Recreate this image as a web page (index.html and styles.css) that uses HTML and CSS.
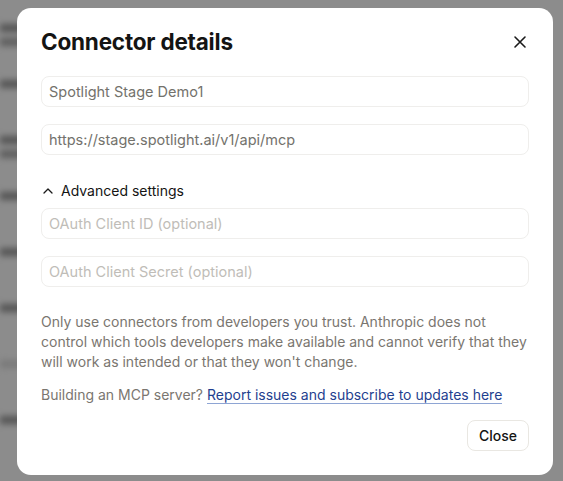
FILE: index.html
```html
<!DOCTYPE html>
<html lang="en">
<head>
<meta charset="UTF-8">
<meta name="viewport" content="width=device-width, initial-scale=1.0">
<title>Connector details</title>
<link rel="stylesheet" href="styles.css">
</head>
<body>

<div class="page">
  <div class="page-line two"></div>
  <div class="page-line"></div>
  <div class="page-line two"></div>
  <div class="page-line"></div>
  <div class="page-line"></div>
  <div class="page-line"></div>
  <div class="page-line faint"></div>
  <div class="page-line"></div>
</div>

<div class="overlay">
  <div class="modal">
    <div class="modal-header">
      <h2>Connector details</h2>
      <button class="close-x" type="button" aria-label="Close">
        <svg width="14" height="14" viewBox="0 0 14 14"><path d="M2 2 L12 12 M12 2 L2 12" stroke="#1a1a1a" stroke-width="1.6" stroke-linecap="round"/></svg>
      </button>
    </div>

    <div class="fields">
      <input class="field" type="text" value="Spotlight Stage Demo1">
      <input class="field" type="text" value="https://stage.spotlight.ai/v1/api/mcp">
    </div>

    <button class="advanced" type="button">
      <svg width="12" height="12" viewBox="0 0 12 12"><path d="M2 8 L6 4 L10 8" fill="none" stroke="#1a1a1a" stroke-width="1.3" stroke-linecap="round" stroke-linejoin="round"/></svg>
      Advanced settings
    </button>

    <div class="fields">
      <input class="field" type="text" placeholder="OAuth Client ID (optional)">
      <input class="field" type="text" placeholder="OAuth Client Secret (optional)">
    </div>

    <p class="note">Only use connectors from developers you trust. Anthropic does not control which tools developers make available and cannot verify that they will work as intended or that they won't change.</p>
    <p class="note">Building an MCP server? <a href="#">Report issues and subscribe to updates here</a></p>

    <div class="modal-footer">
      <button class="close-btn" type="button">Close</button>
    </div>
  </div>
</div>

</body>
</html>
```

FILE: styles.css
```css
body {
  margin: 0;
  padding: 0;
  font-family: 'Inter', 'Noto Sans', sans-serif;
  background-color: #fff;
  width: 563px;
  height: 481px;
  overflow: hidden;
}
.page {
  padding: 24px 0 0 0;
  filter: blur(3px);
}
.page-line {
  width: 26px;
  height: 8px;
  background-color: #999;
  margin-bottom: 48px;
}
.page-line.two {
  box-shadow: 0 14px 0 #aaa;
}
.page-line.faint {
  background-color: #ddd;
}
.overlay {
  position: fixed;
  inset: 0;
  background-color: rgba(0, 0, 0, 0.45);
  padding: 8px 10px 6px 17px;
}
.modal {
  background-color: #fff;
  border-radius: 14px;
  width: 536px;
  height: 467px;
  box-sizing: border-box;
  padding: 20px 24px 24px 24px;
  display: flex;
  flex-direction: column;
}
.modal-header {
  display: flex;
  align-items: center;
  justify-content: space-between;
  margin-bottom: 20px;
}
h2 {
  margin: 0;
  font-size: 22.5px;
  line-height: 28px;
  font-weight: 700;
  color: #141413;
  letter-spacing: -0.2px;
}
.close-x {
  border: none;
  background: none;
  padding: 0;
  width: 14px;
  height: 14px;
  margin-right: 2px;
  cursor: pointer;
}
.fields {
  display: flex;
  flex-direction: column;
  gap: 17px;
}
.field {
  height: 31px;
  box-sizing: border-box;
  border: 1px solid #efeeec;
  border-radius: 8px;
  padding: 0 7px;
  font-family: inherit;
  font-size: 14.5px;
  color: #73726c;
  background-color: #fff;
  outline: none;
}
.field::placeholder {
  color: #bfbdb8;
}
.advanced {
  display: flex;
  align-items: center;
  gap: 7px;
  border: none;
  background: none;
  padding: 0;
  margin: 27px 0 9px 1px;
  font-family: inherit;
  font-size: 14px;
  color: #141413;
  cursor: pointer;
}
.note {
  margin: 25px 0 0 0;
  font-size: 14px;
  line-height: 20px;
  color: #7a7670;
}
.note + .note {
  margin-top: 13px;
}
.note a {
  color: #1f3f8f;
  text-decoration: none;
  border-bottom: 1px solid #8ea5d4;
}
.modal-footer {
  margin-top: auto;
  display: flex;
  justify-content: flex-end;
}
.close-btn {
  height: 31px;
  padding: 0 11px;
  border: 1px solid #e9e7e2;
  border-radius: 8px;
  background-color: #fff;
  font-family: inherit;
  font-size: 14px;
  font-weight: 500;
  color: #141413;
  cursor: pointer;
}
```
